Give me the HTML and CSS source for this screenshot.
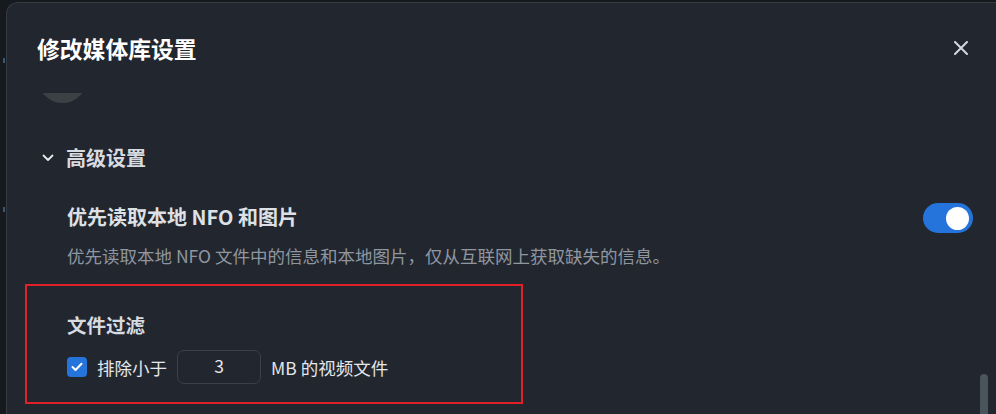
FILE: index.html
```html
<!DOCTYPE html>
<html lang="zh-CN">

<head>
    <meta charset="UTF-8">
    <title>修改媒体库设置</title>
    <link rel="stylesheet" href="styles.css">
</head>

<body>
    <div class="screen">
        <div class="edge">
            <span class="edge-mark mark-a"></span>
            <span class="edge-mark mark-b"></span>
        </div>

        <div class="dialog">
            <header class="dialog-head">
                <h2 class="dialog-title">修改媒体库设置</h2>
                <button class="close" aria-label="关闭">
                    <svg width="14" height="14" viewBox="0 0 14 14">
                        <path d="M1 1L13 13M13 1L1 13" stroke="#d3d8df" stroke-width="2" stroke-linecap="round" />
                    </svg>
                </button>
            </header>

            <div class="dialog-body">
                <div class="scroll">
                    <div class="scroll-content">
                        <div class="avatar"></div>

                        <div class="group-title">
                            <svg class="chevron" width="12" height="8" viewBox="0 0 12 8">
                                <path d="M1.5 1.5L6 6L10.5 1.5" fill="none" stroke="#e6e9ee" stroke-width="1.8" stroke-linecap="round" stroke-linejoin="round" />
                            </svg>
                            <span>高级设置</span>
                        </div>

                        <div class="setting">
                            <div class="setting-text">
                                <div class="setting-name">优先读取本地 NFO 和图片</div>
                                <div class="setting-desc">优先读取本地 NFO 文件中的信息和本地图片，仅从互联网上获取缺失的信息。</div>
                            </div>
                            <span class="switch"><span class="knob"></span></span>
                        </div>

                        <div class="filter">
                            <div class="filter-name">文件过滤</div>
                            <div class="filter-row">
                                <span class="check">
                                    <svg width="12" height="10" viewBox="0 0 12 10">
                                        <path d="M1.5 5L4.5 8L10.5 1.8" fill="none" stroke="#fff" stroke-width="2" stroke-linecap="round" stroke-linejoin="round" />
                                    </svg>
                                </span>
                                <span>排除小于</span>
                                <input class="size-input" type="text" value="3" />
                                <span>MB 的视频文件</span>
                            </div>
                        </div>
                    </div>
                </div>
                <div class="scrollbar"><div class="thumb"></div></div>
            </div>
        </div>
    </div>
</body>

</html>
```

FILE: styles.css
```css
* {
    box-sizing: border-box;
}

body {
    margin: 0;
    background-color: #16191d;
    font-family: "Noto Sans CJK SC", "Noto Sans", sans-serif;
    overflow: hidden;
}

.screen {
    display: flex;
    height: 414px;
    padding-top: 2px;
}

.edge {
    width: 6px;
    display: flex;
    flex-direction: column;
}

.edge-mark {
    display: block;
    width: 2px;
    height: 5px;
    margin-left: 3px;
    background-color: #3b5670;
}

.mark-a {
    margin-top: 56px;
}

.mark-b {
    margin-top: 144px;
}

.dialog {
    flex: 1;
    display: flex;
    flex-direction: column;
    background-color: #22262e;
    border-top: 1px solid #363a41;
    border-left: 1px solid #363a41;
    border-radius: 12px 0 0 0;
    overflow: hidden;
}

.dialog-head {
    height: 90px;
    flex-shrink: 0;
    display: flex;
    justify-content: space-between;
    align-items: flex-start;
    padding: 30px 28px 0 30px;
}

.dialog-title {
    margin: 0;
    font-size: 22.8px;
    line-height: 32px;
    font-weight: 700;
    color: #ffffff;
}

.close {
    width: 14px;
    height: 14px;
    margin-top: 8px;
    padding: 0;
    border: none;
    background: none;
    display: flex;
}

.dialog-body {
    flex: 1;
    display: flex;
    min-height: 0;
}

.scroll {
    flex: 1;
    overflow: hidden;
    padding: 0 7px 0 18px;
}

.scroll-content {
    margin-top: -39px;
}

.avatar {
    width: 49px;
    height: 49px;
    margin-left: 13px;
    border-radius: 50%;
    background-color: #3c4146;
}

.group-title {
    display: flex;
    align-items: center;
    gap: 12px;
    margin-top: 41px;
    padding-left: 17px;
    font-size: 20px;
    line-height: 28px;
    font-weight: 700;
    color: #d7dbe0;
}

.setting {
    display: flex;
    justify-content: space-between;
    align-items: flex-start;
    margin-top: 31px;
    padding-left: 42px;
}

.setting-name {
    font-size: 20px;
    line-height: 28px;
    font-weight: 700;
    color: #dde1e6;
}

.setting-desc {
    margin-top: 13px;
    font-size: 17.5px;
    line-height: 24px;
    color: #9096a0;
}

.switch {
    width: 50px;
    height: 30px;
    border-radius: 15px;
    background-color: #2574dc;
    display: flex;
    align-items: center;
    justify-content: flex-end;
    padding-right: 4px;
}

.knob {
    width: 23px;
    height: 23px;
    border-radius: 50%;
    background-color: #ffffff;
}

.filter {
    width: 498px;
    margin-top: 16px;
    border: 2px solid #e3202a;
    padding: 25px 0 18px 40px;
}

.filter-name {
    font-size: 19.5px;
    line-height: 28px;
    font-weight: 700;
    color: #d7dbe0;
}

.filter-row {
    display: flex;
    align-items: center;
    margin-top: 11px;
    font-size: 17.5px;
    color: #e4e7eb;
}

.check {
    width: 20px;
    height: 20px;
    border-radius: 4px;
    background-color: #2574dc;
    display: flex;
    align-items: center;
    justify-content: center;
    margin-right: 10px;
}

.size-input {
    width: 84px;
    height: 34px;
    margin: 0 10px 0 10px;
    border: 1px solid #3b4049;
    border-radius: 7px;
    background-color: #22262e;
    color: #e6e9ed;
    font-family: inherit;
    font-size: 17.5px;
    text-align: center;
    padding: 0 0 4px;
}

.scrollbar {
    width: 8px;
    margin-right: 8px;
    padding-top: 281px;
}

.thumb {
    height: 60px;
    border-radius: 4px;
    background-color: #4b535d;
}
```
